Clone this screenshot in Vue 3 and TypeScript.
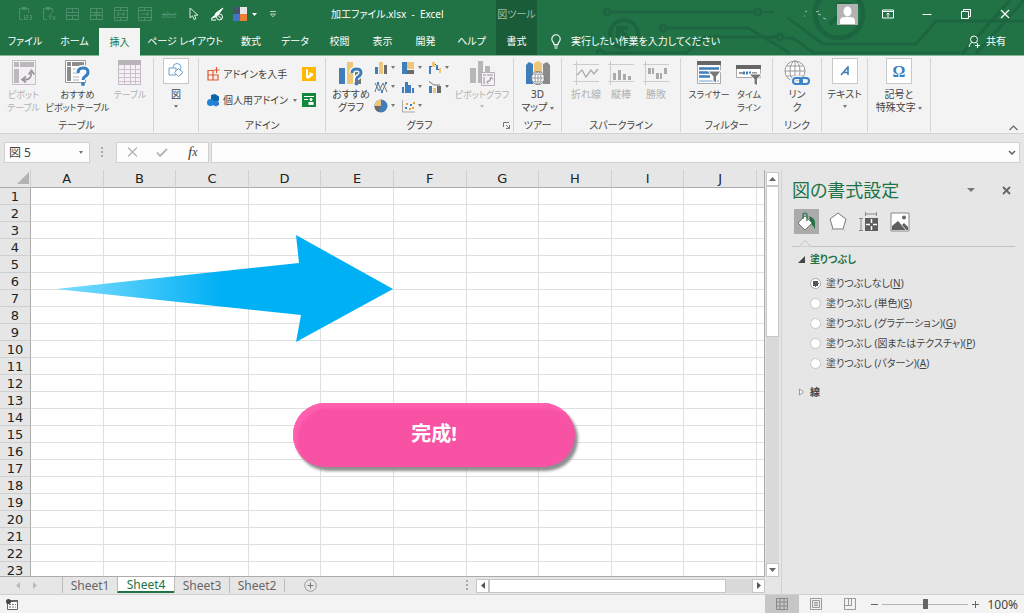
<script setup lang="ts">
import { ref } from 'vue'

const tabs = ['ファイル', 'ホーム', '挿入', 'ページ レイアウト', '数式', 'データ', '校閲', '表示', '開発', 'ヘルプ', '書式']
const activeTab = ref('挿入')

const columns = ['A', 'B', 'C', 'D', 'E', 'F', 'G', 'H', 'I', 'J']
const rows = Array.from({ length: 23 }, (_, i) => i + 1)

const sheets = ['Sheet1', 'Sheet4', 'Sheet3', 'Sheet2']
const activeSheet = ref('Sheet4')

const fills = [
  { id: 'none', label: '塗りつぶしなし', key: 'N' },
  { id: 'solid', label: '塗りつぶし (単色)', key: 'S' },
  { id: 'gradient', label: '塗りつぶし (グラデーション)', key: 'G' },
  { id: 'picture', label: '塗りつぶし (図またはテクスチャ)', key: 'P' },
  { id: 'pattern', label: '塗りつぶし (パターン)', key: 'A' },
]
const fill = ref('none')
const nameBox = ref('図 5')
const formula = ref('')
const zoom = ref(100)
</script>

<template>
  <div class="app">
    <header class="header">
      <svg class="circuit" width="430" height="54" viewBox="594 0 430 54" fill="none" stroke="#1d6540" stroke-width="3" aria-hidden="true">
        <circle cx="607" cy="12" r="3" />
        <path d="M610 12H755" />
        <circle cx="758" cy="12" r="3" />
        <path d="M762 12h12" stroke-width="2" />
        <circle cx="624" cy="34" r="14" stroke-width="4" />
        <path d="M631 41l-11-11M618 38V28h10" stroke-width="4" />
        <circle cx="663" cy="28" r="3" />
        <path d="M666 28H748L790 53" />
        <circle cx="600" cy="53" r="3" />
        <path d="M603 53H686L705 37H776" />
        <circle cx="780" cy="37" r="3" />
        <path d="M785 38h8l21 15H960" />
        <path d="M788 18l35 26h93l20-23h88" />
        <circle cx="839" cy="14" r="24" stroke-width="5" />
        <path d="M830 24l18-18M836 4h14v14" stroke-width="4" />
        <path d="M962 54L1010 0M976 54L1024 0" />
      </svg>

      <div class="titlebar">
        <div class="qat">
          <button class="q dim" aria-label="値の貼り付け"><svg width="14" height="14" viewBox="0 0 14 14"><path d="M5 12.500H1.500v-11h9V6M4 .5h4v2H4z" fill="none" stroke="currentColor" /><path d="M6.500 8v5M8 8.500h2v2H8v2h2M11.500 8.500h2v4h-2M12 10.500h1" fill="none" stroke="currentColor" /></svg></button>
          <button class="q dim" aria-label="数式の貼り付け"><svg width="14" height="14" viewBox="0 0 14 14"><path d="M5 12.500H1.500v-11h9V5M4 .5h4v2H4zM10 6q-2 0-2 7M6.500 9h3M10.500 9l3 4M13.500 9l-3 4" fill="none" stroke="currentColor" /></svg></button>
          <button class="q dim" aria-label="セルの結合"><svg width="14" height="14" viewBox="0 0 14 14"><path d="M.5 1.500h12v11H.5zM.5 5.500h12M.5 8.500h12M6.500 1v4M6.500 9v4" fill="none" stroke="currentColor" /></svg></button>
          <button class="q dim" aria-label="セルの分割"><svg width="14" height="14" viewBox="0 0 14 14"><path d="M.5 1.500h12v11H.5zM.5 5.500h12M.5 8.500h12M6.500 1v12M4 7h6" fill="none" stroke="currentColor" /></svg></button>
          <button class="q dim" aria-label="横方向に結合"><svg width="14" height="14" viewBox="0 0 14 14"><path d="M.5.5h13v13H.5zM1 3.500h12M1 10.500h12M3 7h8M5 5L3 7l2 2M9 5l2 2-2 2M6.500 1v2M6.500 11v2" fill="none" stroke="currentColor" /></svg></button>
          <button class="q dim" aria-label="セルの挿入"><svg width="14" height="14" viewBox="0 0 14 14"><path d="M.5.5h13v13H.5zM1 3.500h12M1 10.500h12M3 7h8M9 5l2 2-2 2M6.500 1v2M6.500 11v2" fill="none" stroke="currentColor" /></svg></button>
          <button class="q dim abc" aria-label="取り消し線"><s>abc</s></button>
          <button class="q" aria-label="オブジェクトの選択"><svg width="12" height="14" viewBox="0 0 12 14"><path d="M3 1v10l2.500-2.200L7 12.500l2-.8-1.500-3.500H11z" fill="none" stroke="#dbe9e1" /></svg></button>
          <button class="q" aria-label="書式のクリア"><svg width="14" height="14" viewBox="0 0 14 14"><path d="M13 1L6 6l-2 4 4-2zM1 12q2-4 5-2M1 13h5" fill="#fff" stroke="#fff" /><circle cx="9.500" cy="10" r="3" fill="#217346" stroke="#fff" /><path d="M7.500 8l4 4" stroke="#fff" /></svg></button>
          <button class="q color" aria-label="テーマの色">
            <svg width="14" height="14" viewBox="0 0 14 14"><path d="M0 0h7v7H0z" fill="#44546a" /><path d="M7 0h7v7H7z" fill="#e7e6e6" /><path d="M0 7h7v7H0z" fill="#4472c4" /><path d="M7 7h7v7H7z" fill="#ed7d31" /></svg>
            <svg width="5" height="3" viewBox="0 0 5 3"><path d="M0 0h5L2.500 3z" fill="#fff" /></svg>
          </button>
          <button class="q" aria-label="クイック アクセス ツール バーのユーザー設定"><svg width="8" height="7" viewBox="0 0 8 7"><path d="M1 .5h6M1.500 3h5L4 5.800z" fill="none" stroke="#b8d3c4" /></svg></button>
        </div>
        <h1 class="title">加工ファイル.xlsx&nbsp; -&nbsp; Excel</h1>
        <div class="context">図ツール</div>
        <div class="window">
          <svg class="specks" width="24" height="14" viewBox="0 0 24 14" aria-hidden="true"><path d="M2 5l2-1M13 5l3-1M1 9l1 0M20 11l3 1M15 7l3 1" stroke="#9fc2af" fill="none" /></svg>
          <button class="avatar" aria-label="アカウント"><svg width="21" height="21" viewBox="0 0 21 21"><path d="M0 0h21v21H0z" fill="#b3b3b3" /><ellipse cx="10.500" cy="7.500" rx="4" ry="5" fill="#fff" /><path d="M3 20v-3q0-4 5-4h5q5 0 5 4v3z" fill="#fff" /></svg></button>
          <button class="win" aria-label="リボンの表示オプション"><svg width="12" height="10" viewBox="0 0 12 10"><path d="M.5 1h11v8H.5zM.5 2.500h11M6 8V4M4.500 5.500L6 4l1.500 1.500" fill="none" stroke="#fff" /></svg></button>
          <button class="win" aria-label="最小化"><svg width="10" height="10" viewBox="0 0 10 10"><path d="M.5 5.500h9" stroke="#fff" /></svg></button>
          <button class="win" aria-label="元に戻す"><svg width="10" height="10" viewBox="0 0 10 10"><path d="M.5 2.500h7v7h-7zM2.500 2.500v-2h7v7h-2" fill="none" stroke="#fff" /></svg></button>
          <button class="win" aria-label="閉じる"><svg width="10" height="10" viewBox="0 0 10 10"><path d="M1 1l8 8M9 1L1 9" stroke="#fff" stroke-width="1.200" /></svg></button>
        </div>
      </div>

      <div class="tabbar">
        <nav class="tabs">
          <button v-for="t in tabs" :key="t" class="tab" :class="{ active: t === activeTab, ctx: t === '書式' }" @click="activeTab = t">{{ t }}</button>
        </nav>
        <button class="tell">
          <svg width="10" height="15" viewBox="0 0 10 15"><path d="M3 10.500Q3 9 2 8 .8 6.800.8 5a4.200 4.200 0 0 1 8.400 0Q9.200 6.800 8 8 7 9 7 10.500zM3 12h4M3.500 14h3" fill="none" stroke="#fff" stroke-width="1.100" /></svg>
          実行したい作業を入力してください
        </button>
        <button class="share">
          <svg width="13" height="13" viewBox="0 0 13 13"><circle cx="6" cy="4.500" r="3.500" fill="none" stroke="#fff" /><path d="M1 12q.5-4 3.500-5M8 7.500l1 1M7 10.500h5M9.500 8v5" fill="none" stroke="#fff" /></svg>
          共有
        </button>
      </div>
    </header>

    <section class="ribbon" aria-label="挿入">
      <div class="group g-table">
        <div class="tools">
          <button class="big off"><span class="ico"><svg width="24" height="26" viewBox="0 0 24 26"><path d="M.5.5h23v24H.5z" fill="#f4eff4" stroke="#c2bfc2" /><path d="M2 2h5v5H2zM8 2h14v5H8zM2 9h5v14H2z" fill="#bcb9bc" /><path d="M11.500 19.500q8 1 8-7M16.500 14.500l3-4 3 4M14 16.500l-4 3 4 3" fill="none" stroke="#999" stroke-width="1.700" /></svg></span><span>ピボット<br />テーブル</span></button>
          <button class="big"><span class="ico"><svg width="26" height="26" viewBox="0 0 26 26"><path d="M.5.5h20v22H.5z" fill="#fff" stroke="#999" /><path d="M2 2h4v4H2zM7 2h12v4H7zM2 7h4v14H2z" fill="#8c8c8c" /><path d="M8 9h10M8 13h6M8 17h6M8 20h6" stroke="#aaa" /><path d="M13 13q0-5 5-5t5 4q0 3-3 4.500-2 1.200-2 3.500" fill="none" stroke="#fff" stroke-width="6" /><path d="M13 13q0-5 5-5t5 4q0 3-3 4.500-2 1.200-2 3.500" fill="none" stroke="#3a7fc0" stroke-width="3.200" /><circle cx="18" cy="24" r="2" fill="#3a7fc0" /></svg></span><span>おすすめ<br />ピボットテーブル</span></button>
          <button class="big off"><span class="ico"><svg width="24" height="26" viewBox="0 0 24 26"><path d="M.5.5h22v24H.5z" fill="#f6f0f6" stroke="#c2bcc2" /><path d="M0 0h23v5H0z" fill="#b9b4b9" /><path d="M0 9.500h23M0 13.500h23M0 17.500h23M0 21.500h23M6.500 5v20M12.500 5v20M17.500 5v20" stroke="#c9c2c9" /></svg></span><span>テーブル</span></button>
        </div>
        <h2>テーブル</h2>
      </div>

      <div class="group g-pic">
        <div class="tools">
          <button class="big"><span class="ico boxed"><svg width="16" height="16" viewBox="0 0 16 16"><circle cx="9" cy="4.500" r="4" fill="#fff" stroke="#6b9fce" /><path d="M1 5h7v7H1z" fill="#fff" stroke="#6b9fce" /><path d="M10.500 5.500l4.500 4-4.500 4-4-4z" fill="#fff" stroke="#6b9fce" /></svg></span><span>図</span><i class="caret" /></button>
        </div>
        <h2></h2>
      </div>

      <div class="group g-addin">
        <div class="addins">
          <button class="row"><svg width="13" height="14" viewBox="0 0 13 14"><path d="M1 3.500h5v9.500H1zM1 8h10v5H1M6 8v5M11 8v5M9.500 0v6M6.500 3h6" fill="none" stroke="#e0592f" stroke-width="1.200" /></svg>アドインを入手</button>
          <button class="mini" aria-label="Bing Maps"><svg width="14" height="14" viewBox="0 0 14 14"><path d="M0 0h14v14H0z" fill="#ffb900" /><path d="M4 2l2 .8v5.700l2-1.200-1-2.300 4 1.500v2L6 12l-2-1.200z" fill="#fff" /></svg></button>
          <button class="row"><svg width="13" height="13" viewBox="0 0 13 13"><path d="M4 1l4-1 4 2.500v4L8 9 4 6z" fill="#0a64ad" /><circle cx="3.500" cy="8.500" r="3.500" fill="#1b86d6" /><path d="M6 8l3-1.500L12 8v3l-3 1.500L6 11z" fill="#2b7cd3" /></svg>個人用アドイン<i class="caret" /></button>
          <button class="mini" aria-label="People Graph"><svg width="14" height="14" viewBox="0 0 14 14"><path d="M0 0h14v14H0z" fill="#10893e" /><path d="M2 3.500h10M2 6.500h4" stroke="#fff" /><circle cx="9" cy="6.500" r="1.500" fill="#fff" /><path d="M6.500 9h5v3h-5z" fill="#fff" /></svg></button>
        </div>
        <h2>アドイン</h2>
      </div>

      <div class="group g-chart">
        <div class="tools">
          <button class="big"><span class="ico"><svg width="26" height="26" viewBox="0 0 26 26"><path d="M1 8h6v16H1z" fill="#3f7dbb" /><path d="M9 2h6v22H9z" fill="#eec67a" /><path d="M17 9h6v15h-6z" fill="#777" /><path d="M14 13q0-4 4.500-4t4.500 3.500q0 2.500-2.500 4-2 1-2 3.500" fill="none" stroke="#fff" stroke-width="5.500" /><path d="M14 13q0-4 4.500-4t4.500 3.500q0 2.500-2.500 4-2 1-2 3.500" fill="none" stroke="#3f7dbb" stroke-width="3" /><circle cx="18.500" cy="23.500" r="2" fill="#3f7dbb" /></svg></span><span>おすすめ<br />グラフ</span></button>
          <div class="charts">
            <button aria-label="縦棒グラフ"><svg width="14" height="14" viewBox="0 0 14 14"><path d="M1 6h3v7H1z" fill="#3f7dbb" /><path d="M5 1h4v12H5z" fill="#eec67a" /><path d="M10 4h3v9h-3z" fill="#6b6b6b" /></svg><i class="caret" /></button>
            <button aria-label="階層構造グラフ"><svg width="14" height="14" viewBox="0 0 14 14"><path d="M1 1h5v12H1z" fill="#3f7dbb" /><path d="M6 1h7v7H6z" fill="#eec67a" /><path d="M6 9h7v4H6z" fill="#6b6b6b" /></svg><i class="caret" /></button>
            <button aria-label="ウォーターフォール図"><svg width="14" height="14" viewBox="0 0 14 14"><path d="M1 5h2v8H1zM8 4h2v5H8z" fill="#3f7dbb" /><path d="M4 1h3v5H4zM11 7h2v5h-2z" fill="#eec67a" /><path d="M3 5.500h1M7 3.500h1M10 8.500h1" stroke="#555" /></svg><i class="caret" /></button>
            <button aria-label="折れ線グラフ"><svg width="14" height="14" viewBox="0 0 14 14" fill="none"><path d="M1 12L4 3l4 9 4-9" stroke="#3f7dbb" /><path d="M1 3l4 8 4-8 4 9" stroke="#777" /><path d="M3 2h2v2H3zM11 2h2v2h-2zM7 11h2v2H7z" fill="#3f7dbb" /></svg><i class="caret" /></button>
            <button aria-label="統計グラフ"><svg width="14" height="14" viewBox="0 0 14 14"><path d="M1 7h2v6H1zM4 2h3v11H4zM7 5h3v8H7zM11 8h2v5h-2z" fill="#3f7dbb" /></svg><i class="caret" /></button>
            <button aria-label="複合グラフ"><svg width="14" height="14" viewBox="0 0 14 14"><path d="M1 6h3v7H1z" fill="#3f7dbb" /><path d="M5 8h3v5H5z" fill="#eec67a" /><path d="M9 6h4v7H9z" fill="#6b6b6b" /><path d="M1 1.500l5 3.500 6 0" stroke="#777" fill="none" /></svg><i class="caret" /></button>
            <button aria-label="円グラフ"><svg width="14" height="14" viewBox="0 0 14 14"><circle cx="7" cy="7" r="6.500" fill="#3f7dbb" /><path d="M7 7V.5A6.500 6.500 0 0 0 .5 7z" fill="#eec67a" /><path d="M7 7H.5a6.500 6.500 0 0 0 4 6z" fill="#6b6b6b" /></svg><i class="caret" /></button>
            <button aria-label="散布図"><svg width="14" height="14" viewBox="0 0 14 14"><path d="M1.500 1v12H14" fill="none" stroke="#aaa" /><path d="M4 8h2v2H4zM9 5h2v2H9z" fill="#3f7dbb" /><path d="M5 4h2v2H5zM8 9h2v2H8zM12 3h2v2h-2zM11 8h2v2h-2z" fill="#e5a33c" /></svg><i class="caret" /></button>
          </div>
          <button class="big off"><span class="ico"><svg width="26" height="26" viewBox="0 0 26 26"><path d="M1 8h6v15H1zM9 1h5v22H9zM16 6h5v8h-5z" fill="#b9b6b9" /><path d="M12.500 12.500h13v13h-13z" fill="#f6f0f6" stroke="#b5b0b5" /><path d="M14 14h3v2h-3zM18 14h6v2h-6zM14 17h2v7h-2z" fill="#c5c0c5" /><path d="M18 22q4 0 4-4M20.500 19.500L22 17l2 2.500M19.500 20.500L17.500 22l2 2" fill="none" stroke="#999" /></svg></span><span>ピボットグラフ</span><i class="caret" /></button>
        </div>
        <h2>グラフ</h2>
        <button class="launcher" aria-label="グラフの詳細設定"><svg width="7" height="7" viewBox="0 0 7 7"><path d="M.5 5V.5H6M3 3l3 3M6.500 3v3.500H3" fill="none" stroke="#777" /></svg></button>
      </div>

      <div class="group g-tour">
        <div class="tools">
          <button class="big"><span class="ico"><svg width="26" height="26" viewBox="0 0 26 26"><path d="M1 5l3-3 4 2v20H1z" fill="#3f7dbb" /><path d="M9 3l4-2 4 2v20H9z" fill="#eec67a" /><path d="M18 4l4-2 3 3v19h-7z" fill="#8a8a8a" /><circle cx="13" cy="18" r="6.500" fill="#fff" stroke="#777" /><path d="M7 18h12M13 11.500v13" stroke="#999" /><path d="M8.500 14.500h9M8.500 21.500h9" stroke="#bbb" /><ellipse cx="13" cy="18" rx="3" ry="6.500" fill="none" stroke="#999" /></svg></span><span>3D<br />マップ <i class="caret" /></span></button>
        </div>
        <h2>ツアー</h2>
      </div>

      <div class="group g-spark">
        <div class="tools">
          <button class="big off"><span class="ico"><svg width="26" height="24" viewBox="0 0 26 24"><path d="M0 3.500h26M0 20.500h26M3.500 0v24" stroke="#ccc" /><path d="M4 14l5-5 4 7 5-7 3 4 4-5" fill="none" stroke="#aaa" stroke-width="1.300" /></svg></span><span>折れ線</span></button>
          <button class="big off"><span class="ico"><svg width="26" height="24" viewBox="0 0 26 24"><path d="M0 3.500h26M0 20.500h26M2.500 0v24" stroke="#ccc" /><path d="M5 12h3v7H5zM10 9h3v10h-3zM15 13h3v6h-3zM20 15h3v4h-3z" fill="#aaa" /></svg></span><span>縦棒</span></button>
          <button class="big off"><span class="ico"><svg width="26" height="24" viewBox="0 0 26 24"><path d="M0 3.500h26M0 20.500h26M2.500 0v24" stroke="#ccc" /><path d="M5 7h3v6H5zM9 7h2v6H9zM13 12h3v6h-3zM17 12h2v6h-2zM21 7h3v6h-3z" fill="#aaa" /></svg></span><span>勝敗</span></button>
        </div>
        <h2>スパークライン</h2>
      </div>

      <div class="group g-filter">
        <div class="tools">
          <button class="big"><span class="ico"><svg width="26" height="26" viewBox="0 0 26 26"><path d="M1.500 1.500h23v22h-23z" fill="#fff" stroke="#aaa" /><path d="M1 1h24v4H1z" fill="#666" /><path d="M3 8.500h20M3 12.500h20M3 16.500h11" stroke="#3f7dbb" stroke-width="2.500" /><path d="M3 21h20" stroke="#b4cfe8" stroke-width="2" /><path d="M12 11h13l-4.500 5.500V23l-3.500-2v-4.500z" fill="#777" stroke="#fff" /></svg></span><span>スライサー</span></button>
          <button class="big"><span class="ico"><svg width="26" height="26" viewBox="0 0 26 26"><path d="M.5 5.500h24v12H.5z" fill="#fff" stroke="#aaa" /><path d="M0 5h25v4H0z" fill="#666" /><path d="M3 13h4M16 13h5" stroke="#999" stroke-width="2" /><path d="M7 13h8" stroke="#3f7dbb" stroke-width="3" stroke-dasharray="2 1" /><path d="M13 14h13l-4.500 5v7l-3.500-2v-5z" fill="#777" stroke="#fff" /></svg></span><span>タイム<br />ライン</span></button>
        </div>
        <h2>フィルター</h2>
      </div>

      <div class="group g-link">
        <div class="tools">
          <button class="big"><span class="ico"><svg width="28" height="27" viewBox="0 0 28 27"><g fill="none" stroke="#999"><circle cx="12" cy="11" r="10" fill="#fff" /><ellipse cx="12" cy="11" rx="5" ry="10" /><path d="M2 11h20M12 1v20M3.500 6h17M3.500 16h17" /></g><g fill="none"><rect x="10" y="18" width="9" height="6" rx="3" stroke="#f3f3f3" stroke-width="5" /><rect x="10" y="18" width="9" height="6" rx="3" stroke="#3a82c8" stroke-width="2" /><rect x="17" y="18" width="9" height="6" rx="3" stroke="#3a82c8" stroke-width="2" /></g></svg></span><span>リン<br />ク</span></button>
        </div>
        <h2>リンク</h2>
      </div>

      <div class="group g-text">
        <div class="tools">
          <button class="big"><span class="ico boxed"><svg width="10" height="10" viewBox="0 0 10 10"><path d="M1 9L8 1v8M3.500 6.500H8" fill="none" stroke="#3f7dbb" stroke-width="1.600" /></svg></span><span>テキスト</span><i class="caret" /></button>
        </div>
        <h2></h2>
      </div>

      <div class="group g-symbol">
        <div class="tools">
          <button class="big"><span class="ico boxed omega">Ω</span><span>記号と<br />特殊文字 <i class="caret" /></span></button>
        </div>
        <h2></h2>
      </div>

      <button class="collapse" aria-label="リボンを折りたたむ"><svg width="9" height="6" viewBox="0 0 9 6"><path d="M.5 5l4-4 4 4" fill="none" stroke="#666" stroke-width="1.200" /></svg></button>
    </section>

    <div class="formulabar">
      <div class="namebox">
        <input v-model="nameBox" aria-label="名前ボックス" />
        <button aria-label="名前の一覧"><i class="caret" /></button>
      </div>
      <svg class="dots" width="3" height="11" viewBox="0 0 3 11"><path d="M0 0h2v2H0zM0 4h2v2H0zM0 8h2v2H0z" fill="#aaa" /></svg>
      <div class="fx">
        <button aria-label="キャンセル"><svg width="11" height="10" viewBox="0 0 11 10"><path d="M1 .5l9 9M10 .5l-9 9" stroke="#b5b5b5" stroke-width="1.400" /></svg></button>
        <button aria-label="入力"><svg width="12" height="9" viewBox="0 0 12 9"><path d="M1 4.500l3 3.500 7-7" fill="none" stroke="#b5b5b5" stroke-width="1.800" /></svg></button>
        <button aria-label="関数の挿入" class="fn">f<small>x</small></button>
      </div>
      <div class="formula">
        <input v-model="formula" aria-label="数式バー" />
        <button aria-label="数式バーの展開"><svg width="8" height="5" viewBox="0 0 8 5"><path d="M1 1l3 3 3-3" fill="none" stroke="#666" stroke-width="1.600" /></svg></button>
      </div>
    </div>

    <div class="body">
      <main class="workbook">
        <div class="sheetarea">
          <div class="sheet">
            <table>
              <colgroup><col class="c-head" /><col v-for="c in columns" :key="c" /><col class="c-tail" /></colgroup>
              <thead>
                <tr>
                  <th class="corner"><svg width="13" height="13" viewBox="0 0 13 13"><path d="M12 0v12H0z" fill="#b2b2b2" /></svg></th>
                  <th v-for="c in columns" :key="c" scope="col">{{ c }}</th>
                  <th></th>
                </tr>
              </thead>
              <tbody>
                <tr v-for="r in rows" :key="r">
                  <th scope="row">{{ r }}</th>
                  <td v-for="c in columns" :key="c"></td>
                  <td></td>
                </tr>
              </tbody>
            </table>
            <svg class="arrow" width="338" height="108" viewBox="0 0 338 108" role="img" aria-label="矢印">
              <defs><linearGradient id="sky"><stop offset="0" stop-color="#7adcff" /><stop offset=".15" stop-color="#5bd0fc" /><stop offset=".49" stop-color="#00b0f4" /></linearGradient></defs>
              <path d="M0 54L243 28 240 0 337 54 240 107 245 80z" fill="url(#sky)" />
            </svg>
            <div class="pill">完成!</div>
          </div>
          <div class="vscroll">
            <button aria-label="上へ"><svg width="7" height="4" viewBox="0 0 7 4"><path d="M0 4h7L3.500 0z" fill="#666" /></svg></button>
            <div class="vtrack"><div class="vthumb" /></div>
            <button aria-label="下へ"><svg width="7" height="4" viewBox="0 0 7 4"><path d="M0 0h7L3.500 4z" fill="#666" /></svg></button>
          </div>
        </div>
        <div class="sheetbar">
          <div class="nav">
            <button aria-label="前のシート"><svg width="4" height="7" viewBox="0 0 4 7"><path d="M4 0v7L0 3.500z" fill="#bbb" /></svg></button>
            <button aria-label="次のシート"><svg width="4" height="7" viewBox="0 0 4 7"><path d="M0 0v7l4-3.500z" fill="#bbb" /></svg></button>
          </div>
          <button v-for="s in sheets" :key="s" class="sheettab" :class="{ active: s === activeSheet }" @click="activeSheet = s">{{ s }}</button>
          <button class="add" aria-label="新しいシート"><svg width="13" height="13" viewBox="0 0 13 13"><circle cx="6.500" cy="6.500" r="5.800" fill="none" stroke="#999" /><path d="M3.500 6.500h6M6.500 3.500v6" stroke="#777" /></svg></button>
          <svg class="dots push" width="3" height="11" viewBox="0 0 3 11"><path d="M0 0h2v2H0zM0 4h2v2H0zM0 8h2v2H0z" fill="#aaa" /></svg>
          <div class="hscroll">
            <button aria-label="左へ"><svg width="4" height="7" viewBox="0 0 4 7"><path d="M4 0v7L0 3.500z" fill="#555" /></svg></button>
            <div class="htrack"><div class="hthumb" /></div>
            <button aria-label="右へ"><svg width="4" height="7" viewBox="0 0 4 7"><path d="M0 0v7l4-3.500z" fill="#555" /></svg></button>
          </div>
        </div>
      </main>

      <aside class="pane">
        <div class="panehead">
          <h2>図の書式設定</h2>
          <button aria-label="作業ウィンドウ オプション"><svg width="8" height="4" viewBox="0 0 8 4"><path d="M0 0h8L4 4z" fill="#777" /></svg></button>
          <button aria-label="閉じる"><svg width="9" height="9" viewBox="0 0 9 9"><path d="M1 1l7 7M8 1L1 8" stroke="#666" stroke-width="1.800" /></svg></button>
        </div>
        <div class="panetabs">
          <button class="on" aria-label="塗りつぶしと線"><svg width="20" height="20" viewBox="0 0 20 20"><path d="M12 4q6 2 6 7v6q-2-4-4-5z" fill="#217346" /><path d="M8 4l7 7-7 7-7-7z" fill="#fff" stroke="#777" /><path d="M6 7V3q0-2 2-2t2 2v6" fill="none" stroke="#217346" stroke-width="1.200" /></svg></button>
          <button aria-label="効果"><svg width="20" height="20" viewBox="0 0 20 20"><path d="M10 1l8 6-3 10H5L2 7z" fill="#fff" stroke="#777" /><path d="M3 19l2-2h10l2 2" fill="none" stroke="#bbb" /></svg></button>
          <button aria-label="サイズとプロパティ"><svg width="20" height="20" viewBox="0 0 20 20"><path d="M6 2h12M6.500 0v4M17.500 0v4M2 6v12M0 6.500h4M0 18.500h4" stroke="#888" fill="none" /><path d="M6 6h13v13H6z" fill="#5e5e5e" /><path d="M12.500 7v4M12.500 14v4M7 12.500h4M14 12.500h4" stroke="#fff" stroke-width="1.500" /></svg></button>
          <button aria-label="図"><svg width="20" height="20" viewBox="0 0 20 20"><path d="M1 1h18v18H1z" fill="#fff" stroke="#888" /><circle cx="14" cy="5.500" r="2" fill="#666" /><path d="M2 18v-4l6-5 4 4 2-2 4 4v3z" fill="#5e5e5e" /><path d="M10 11l6 7" stroke="#ddd" /></svg></button>
        </div>
        <svg class="notch" width="24" height="8" viewBox="0 0 24 8" aria-hidden="true"><path d="M0 7.500h6l6-6 6 6h6" fill="#e6e6e6" stroke="#c3c3c3" /></svg>
        <div class="rule" />
        <button class="section open"><svg width="7" height="7" viewBox="0 0 7 7"><path d="M7 0v7H0z" fill="#444" /></svg>塗りつぶし</button>
        <fieldset class="fills" aria-label="塗りつぶし">
          <label v-for="f in fills" :key="f.id" :for="f.id">
            <input :id="f.id" v-model="fill" type="radio" name="fill" :value="f.id" />
            <span>{{ f.label }}(<u>{{ f.key }}</u>)</span>
          </label>
        </fieldset>
        <button class="section"><svg width="7" height="8" viewBox="0 0 7 8"><path d="M1.500 1l4 3-4 3z" fill="#fff" stroke="#999" /></svg>線</button>
      </aside>
    </div>

    <footer class="status">
      <button class="macro" aria-label="マクロの記録"><svg width="12" height="11" viewBox="0 0 12 11"><path d="M1.500 2.500h10v8h-10z" fill="#fff" stroke="#666" /><path d="M3 5.500h2M6 5.500h2M9 5.500h1M3 8h2M6 8h2M9 8h1" stroke="#777" /><path d="M4 1h8v2H4z" fill="#666" /><circle cx="2.500" cy="2.500" r="2.500" fill="#444" /></svg></button>
      <div class="views">
        <button class="on" aria-label="標準"><svg width="12" height="12" viewBox="0 0 12 12"><path d="M.5.5h11v11H.5zM.5 4h11M.5 8h11M4 .5v11M8 .5v11" fill="none" stroke="#888" /></svg></button>
        <button aria-label="ページ レイアウト"><svg width="12" height="12" viewBox="0 0 12 12"><path d="M.5.5h11v11H.5zM2.500 2.500h7v7h-7zM4 4.500h4M4 6h4M4 7.500h4" fill="none" stroke="#999" /></svg></button>
        <button aria-label="改ページ プレビュー"><svg width="12" height="12" viewBox="0 0 12 12"><path d="M.5.5h11v11H.5zM.5 7.500h7V.5M4.500 .5v7" fill="none" stroke="#999" /></svg></button>
      </div>
      <button class="step" aria-label="縮小"><svg width="7" height="7" viewBox="0 0 7 7"><path d="M0 3.500h7" stroke="#666" /></svg></button>
      <input v-model="zoom" class="zoom" type="range" min="10" max="190" aria-label="ズーム" />
      <button class="step" aria-label="拡大"><svg width="7" height="7" viewBox="0 0 7 7"><path d="M0 3.500h7M3.500 0v7" stroke="#666" /></svg></button>
      <button class="percent">{{ zoom }}%</button>
    </footer>
  </div>
</template>

<style>
body {
  margin: 0;
  overflow: hidden;
}
</style>

<style scoped>
* { box-sizing: border-box; }
.app {
  display: flex;
  flex-direction: column;
  height: 100vh;
  font-family: "Noto Sans", "Noto Sans CJK JP", sans-serif;
  font-feature-settings: "palt";
  font-size: 10px;
  line-height: 13px;
  color: #444;
  background: #e6e6e6;
}
button {
  padding: 0;
  border: 0;
  background: none;
  color: inherit;
  font: inherit;
  font-feature-settings: inherit;
  white-space: nowrap;
}
input { font: inherit; font-feature-settings: inherit; color: inherit; }
h1, h2 { margin: 0; font-size: inherit; font-weight: 400; }
svg { display: block; flex: none; }
.caret {
  display: inline-block;
  border: 2px solid transparent;
  border-top: 3px solid #777;
  border-bottom: 0;
  vertical-align: middle;
}

/* title bar and tabs */
.header {
  position: relative;
  background: #217346;
  color: #fff;
}
.circuit { position: absolute; top: 0; right: 0; }
.titlebar, .tabbar { position: relative; display: flex; align-items: stretch; }
.titlebar { height: 28px; }
.qat { display: flex; width: 331px; padding-left: 13px; }
.q { width: 24px; display: flex; align-items: center; justify-content: center; }
.dim { color: #4b8e69; }
.abc { font-size: 9px; }
.color { width: 32px; gap: 5px; }
.title { width: 165px; line-height: 28px; white-space: nowrap; }
.context { width: 41px; background: #1b5c38; color: #9dbfac; text-align: center; line-height: 28px; }
.window { flex: 1; display: flex; align-items: center; justify-content: flex-end; }
.specks { margin-right: 10px; }
.avatar { margin-right: 10px; }
.win { width: 39px; height: 28px; display: flex; align-items: center; justify-content: center; }
.tabbar { height: 28px; border-bottom: 1px solid #86b79c; }
.tabs {
  display: grid;
  grid-template-columns: 50px 49px 41px 90px 42px 46px 43px 43px 43px 49px 41px;
}
.tab { height: 27px; text-align: center; }
.tab.active { height: 28px; background: #f3f3f3; color: #217346; }
.tab.ctx { background: #1b5c38; }
.tell { display: flex; align-items: center; gap: 10px; margin-left: 14px; }
.share { display: flex; align-items: center; gap: 5px; margin-left: auto; padding-right: 18px; }

/* ribbon */
.ribbon {
  position: relative;
  display: flex;
  height: 78px;
  padding: 2px 0 1px;
  background: #f3f3f3;
  border-bottom: 1px solid #d2d2d2;
}
.group {
  position: relative;
  display: flex;
  flex-direction: column;
  flex: none;
  border-right: 1px solid #d4d4d4;
}
.group h2 { height: 13px; text-align: center; }
.tools { display: flex; justify-content: center; height: 61px; }
.big { display: flex; flex-direction: column; align-items: center; line-height: 13px; }
.ico { display: flex; align-items: center; justify-content: center; height: 26px; margin: 2px 0; }
.big > .caret { margin-top: 4px; }
.boxed { width: 26px; background: #fff; border: 1px solid #c8c8c8; margin-top: 0; margin-bottom: 4px; }
.omega { font-size: 16px; font-weight: 700; color: #3f7dbb; font-family: "Liberation Serif", serif; }
.off { color: #b1b1b1; }
.off .caret { border-top-color: #bbb; }
.g-table { width: 154px; }
.g-table .tools { display: grid; grid-template-columns: 43px 65px 40px; justify-content: start; padding-left: 2px; }
.g-table .big, .g-filter .big, .g-chart .off { font-size: 9px; }
.g-pic { width: 45px; }
.g-addin { width: 127px; }
.addins {
  display: grid;
  grid-template-columns: 90px 14px;
  grid-auto-rows: 26px;
  column-gap: 5px;
  align-items: center;
  height: 61px;
  padding: 3px 0 0 8px;
}
.row { display: flex; align-items: center; gap: 3px; }
.row .caret { margin-left: auto; }
.g-chart { width: 188px; }
.g-chart .tools { display: grid; grid-template-columns: 44px 82px 54px; padding-left: 3px; justify-content: start; }
.charts { display: grid; grid-template-columns: repeat(3, 27px); grid-auto-rows: 19px; }
.charts button { display: flex; align-items: center; gap: 3px; padding-left: 1px; }
.launcher { position: absolute; right: 3px; bottom: 3px; }
.g-tour { width: 48px; }
.g-spark { width: 119px; }
.g-spark .tools { display: grid; grid-template-columns: repeat(3, 35px); }
.g-filter { width: 92px; }
.g-filter .tools { display: grid; grid-template-columns: 46px 34px; justify-content: start; padding-left: 5px; }
.g-link { width: 49px; }
.g-text { width: 46px; }
.g-symbol { width: 63px; }
.collapse { position: absolute; right: 6px; bottom: 2px; }

/* formula bar */
.formulabar { display: flex; align-items: center; height: 36px; padding: 0 4px; }
.namebox, .fx, .formula {
  display: flex;
  align-items: center;
  height: 21px;
  background: #fdfdfd;
  border: 1px solid #d0d0d0;
}
.namebox { width: 86px; }
.namebox input, .formula input { flex: 1; min-width: 0; border: 0; outline: 0; padding: 0 4px; background: none; font-size: 12px; }
.namebox button { width: 16px; }
.dots { margin: 0 12px 0 11px; }
.fx { width: 93px; margin-right: 2px; }
.fx button { flex: 1; display: flex; align-items: center; justify-content: center; }
.fx .fn { font: italic 400 15px "Liberation Serif", serif; }
.fn small { font-size: 12px; }
.formula { flex: 1; }
.formula button { padding: 0 3px; }

/* worksheet */
.body { flex: 1; display: flex; min-height: 0; }
.workbook { flex: 1; display: flex; flex-direction: column; min-width: 0; border-right: 1px solid #d2d2d2; }
.sheetarea { flex: 1; display: flex; min-height: 0; }
.sheet { position: relative; flex: 1; overflow: hidden; background: #fff; border-right: 1px solid #ababab; border-bottom: 1px solid #ababab; }
table { width: 100%; table-layout: fixed; border-collapse: separate; border-spacing: 0; }
.c-head { width: 31px; }
.c-tail { width: 7px; }
th, td { height: 17px; padding: 0; border-right: 1px solid #dfdfdf; border-bottom: 1px solid #dfdfdf; }
th {
  background: #e6e6e6;
  font: 400 13px/16px "DejaVu Sans", sans-serif;
  color: #222;
  border-color: #cfcfcf;
}
thead th { height: 18px; border-bottom-color: #ababab; }
tbody th { padding-top: 2px; line-height: 14px; border-right-color: #ababab; }
tr > :last-child { border-right: 0; }
.corner svg { margin-left: auto; }
.arrow { position: absolute; left: 56px; top: 65px; }
.pill {
  position: absolute;
  left: 293px;
  top: 233px;
  width: 282px;
  height: 64px;
  border-radius: 32px;
  background: #f852a5;
  box-shadow: inset 4px 5px 3px #ff60b0, 3px 4px 3px #8f8f8f;
  color: #fff;
  font-size: 20px;
  font-weight: 700;
  font-feature-settings: normal;
  line-height: 62px;
  text-align: center;
}
.vscroll { display: flex; flex-direction: column; width: 16px; padding: 2px 2px 0 1px; }
.vscroll button, .hscroll button {
  display: flex;
  align-items: center;
  justify-content: center;
  width: 13px;
  height: 14px;
  background: #fff;
  border: 1px solid #c6c6c6;
}
.vtrack { flex: 1; background: #d9d9d9; }
.vthumb { height: 40%; background: #fff; border: 1px solid #c6c6c6; }

.sheetbar { display: flex; align-items: center; height: 17px; padding-right: 16px; }
.nav { display: flex; gap: 13px; width: 62px; padding-left: 16px; height: 14px; align-items: center; }
.sheettab { width: 55px; height: 16px; align-self: flex-start; border-left: 1px solid #bbb; font-size: 12px; line-height: 13px; color: #666; }
.sheettab.active { width: 57px; background: #fff; color: #217346; border-bottom: 2px solid #217346; }
.add { width: 50px; padding-left: 19px; border-left: 1px solid #bbb; }
.push { margin: 0 7px 0 auto; }
.hscroll { display: flex; width: 289px; }
.htrack { flex: 1; background: #d9d9d9; }
.hthumb { width: 90%; height: 14px; background: #fff; border: 1px solid #c6c6c6; }

/* format pane */
.pane { position: relative; width: 242px; padding: 8px 9px 0 10px; }
.panehead { display: flex; align-items: center; height: 24px; }
.panehead h2 { flex: 1; font-size: 18px; line-height: 24px; color: #217346; }
.panehead button { width: 9px; margin-right: 4px; }
.panehead button + button { margin-left: 22px; }
.panetabs { display: flex; gap: 6px; padding: 7px 0 0 2px; }
.panetabs button { display: flex; align-items: center; justify-content: center; width: 25px; height: 25px; }
.panetabs .on { background: #ababab; }
.rule { border-top: 1px solid #c3c3c3; margin-top: 12px; }
.notch { position: absolute; left: 11px; top: 69px; }
.section { display: flex; align-items: center; gap: 5px; height: 14px; margin: 5px 0 0 6px; font-weight: 700; }
.section.open { color: #217346; }
.fills { margin: 7px 0 0 18px; padding: 0; border: 0; }
.fills label { display: flex; align-items: center; gap: 5px; height: 20px; white-space: nowrap; }
.fills input { appearance: none; width: 11px; height: 11px; margin: 0; background: #fff; border: 1px solid #c6c6c6; border-radius: 50%; }
.fills input:checked { background: radial-gradient(circle, #555 0 3px, #fff 3px); border-color: #aaa; }
.fills + .section { margin-top: 12px; }

/* status bar */
.status { display: flex; align-items: center; height: 19px; padding: 0 6px; background: #f3f3f3; border-top: 1px solid #d0d0d0; }
.views { display: flex; margin-left: auto; }
.views button { display: flex; align-items: center; justify-content: center; width: 34px; height: 18px; }
.views .on { background: #c6c6c6; }
.step { margin: 0 4px; }
.zoom { appearance: none; width: 86px; height: 12px; margin: 0; background: linear-gradient(#b5b5b5, #b5b5b5) center / 100% 1px no-repeat; }
.zoom::-webkit-slider-thumb { appearance: none; width: 5px; height: 10px; background: #666; }
.percent { margin-left: 4px; font-size: 12px; }
</style>
